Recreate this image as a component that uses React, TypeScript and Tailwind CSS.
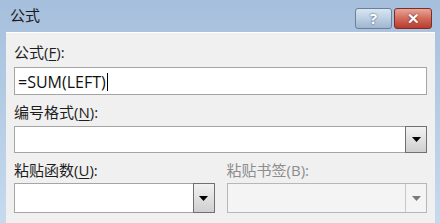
const font = { fontFamily: '"Open Sans", "Noto Sans CJK SC", sans-serif' };

function DropButton({ disabled = false }: { disabled?: boolean }) {
  if (disabled) {
    return (
      <div className="flex h-full w-[21px] items-center justify-center border-l border-[#c5c9cc]">
        <svg width="9" height="5" viewBox="0 0 9 5">
          <path d="M0 0h9L4.5 5z" fill="#7a7a7a" />
        </svg>
      </div>
    );
  }
  return (
    <div className="-my-px -mr-px flex h-[calc(100%+2px)] w-[22px] items-center justify-center border border-[#707070] bg-gradient-to-b from-[#f2f2f2] to-[#cfcfcf]">
      <svg width="9" height="5" viewBox="0 0 9 5">
        <path d="M0 0h9L4.5 5z" fill="#000" />
      </svg>
    </div>
  );
}

function Label({ text, hot, rest, disabled = false }: { text: string; hot: string; rest: string; disabled?: boolean }) {
  return (
    <div className={`h-[20px] text-[15px] leading-[20px] ${disabled ? 'text-[#8d8d8d]' : 'text-[#1e1e1e]'}`}>
      {text}(
      <span className={disabled ? '' : 'underline underline-offset-2'}>{hot}</span>
      ){rest}
    </div>
  );
}

export default function App() {
  return (
    <div style={font} className="flex h-[223px] w-[440px] flex-col overflow-hidden bg-gradient-to-b from-[#a6bfdc] to-[#c6daef]">
      <div className="flex h-[32px] shrink-0 items-start">
        <div className="ml-[10px] mt-[5px] text-[15px] leading-[20px] text-[#1b1b1b]">公式</div>
        <div className="ml-auto mr-[8px] mt-[8px] flex gap-[2px]">
          <div className="flex h-[21px] w-[37px] items-center justify-center rounded-[3px] border border-[#6b7f96] bg-gradient-to-b from-[#d9e5f2] via-[#bccfe3] to-[#9fb6cf] text-[15px] font-bold leading-none text-white [text-shadow:0_0_2px_#2f3f55]">
            ?
          </div>
          <div className="flex h-[21px] w-[38px] items-center justify-center rounded-[3px] border border-[#7b2e26] bg-gradient-to-b from-[#e9a598] via-[#d06a5c] to-[#b93a2c] text-[15px] font-bold leading-none text-white [text-shadow:0_0_2px_#5a1510]">
            ✕
          </div>
        </div>
      </div>
      <div className="ml-[6px] mr-[5px] flex-1 border-t border-white bg-[#f0f0f0] px-[8px] pt-[9px]">
        <Label text="公式" hot="F" rest=":" />
        <div className="mt-[5px] flex h-[28px] items-center border border-[#a5a5a5] bg-white pl-[3px] pt-px text-[16px] text-[#111]">
          =SUM(LEFT)
          <span className="ml-px inline-block h-[18px] w-px bg-black" />
        </div>
        <div className="mt-[7px]">
          <Label text="编号格式" hot="N" rest=":" />
        </div>
        <div className="mt-[4px] flex h-[27px] justify-end border border-[#a5a5a5] bg-white">
          <DropButton />
        </div>
        <div className="mt-[7px] grid grid-cols-2 gap-[12px]">
          <div>
            <Label text="粘贴函数" hot="U" rest=":" />
            <div className="mt-[3px] flex h-[30px] justify-end border border-[#a5a5a5] bg-white">
              <DropButton />
            </div>
          </div>
          <div>
            <Label text="粘贴书签" hot="B" rest=":" disabled />
            <div className="mt-[3px] flex h-[30px] justify-end border border-[#b4b8bb] bg-[#f4f4f4]">
              <DropButton disabled />
            </div>
          </div>
        </div>
      </div>
    </div>
  );
}
